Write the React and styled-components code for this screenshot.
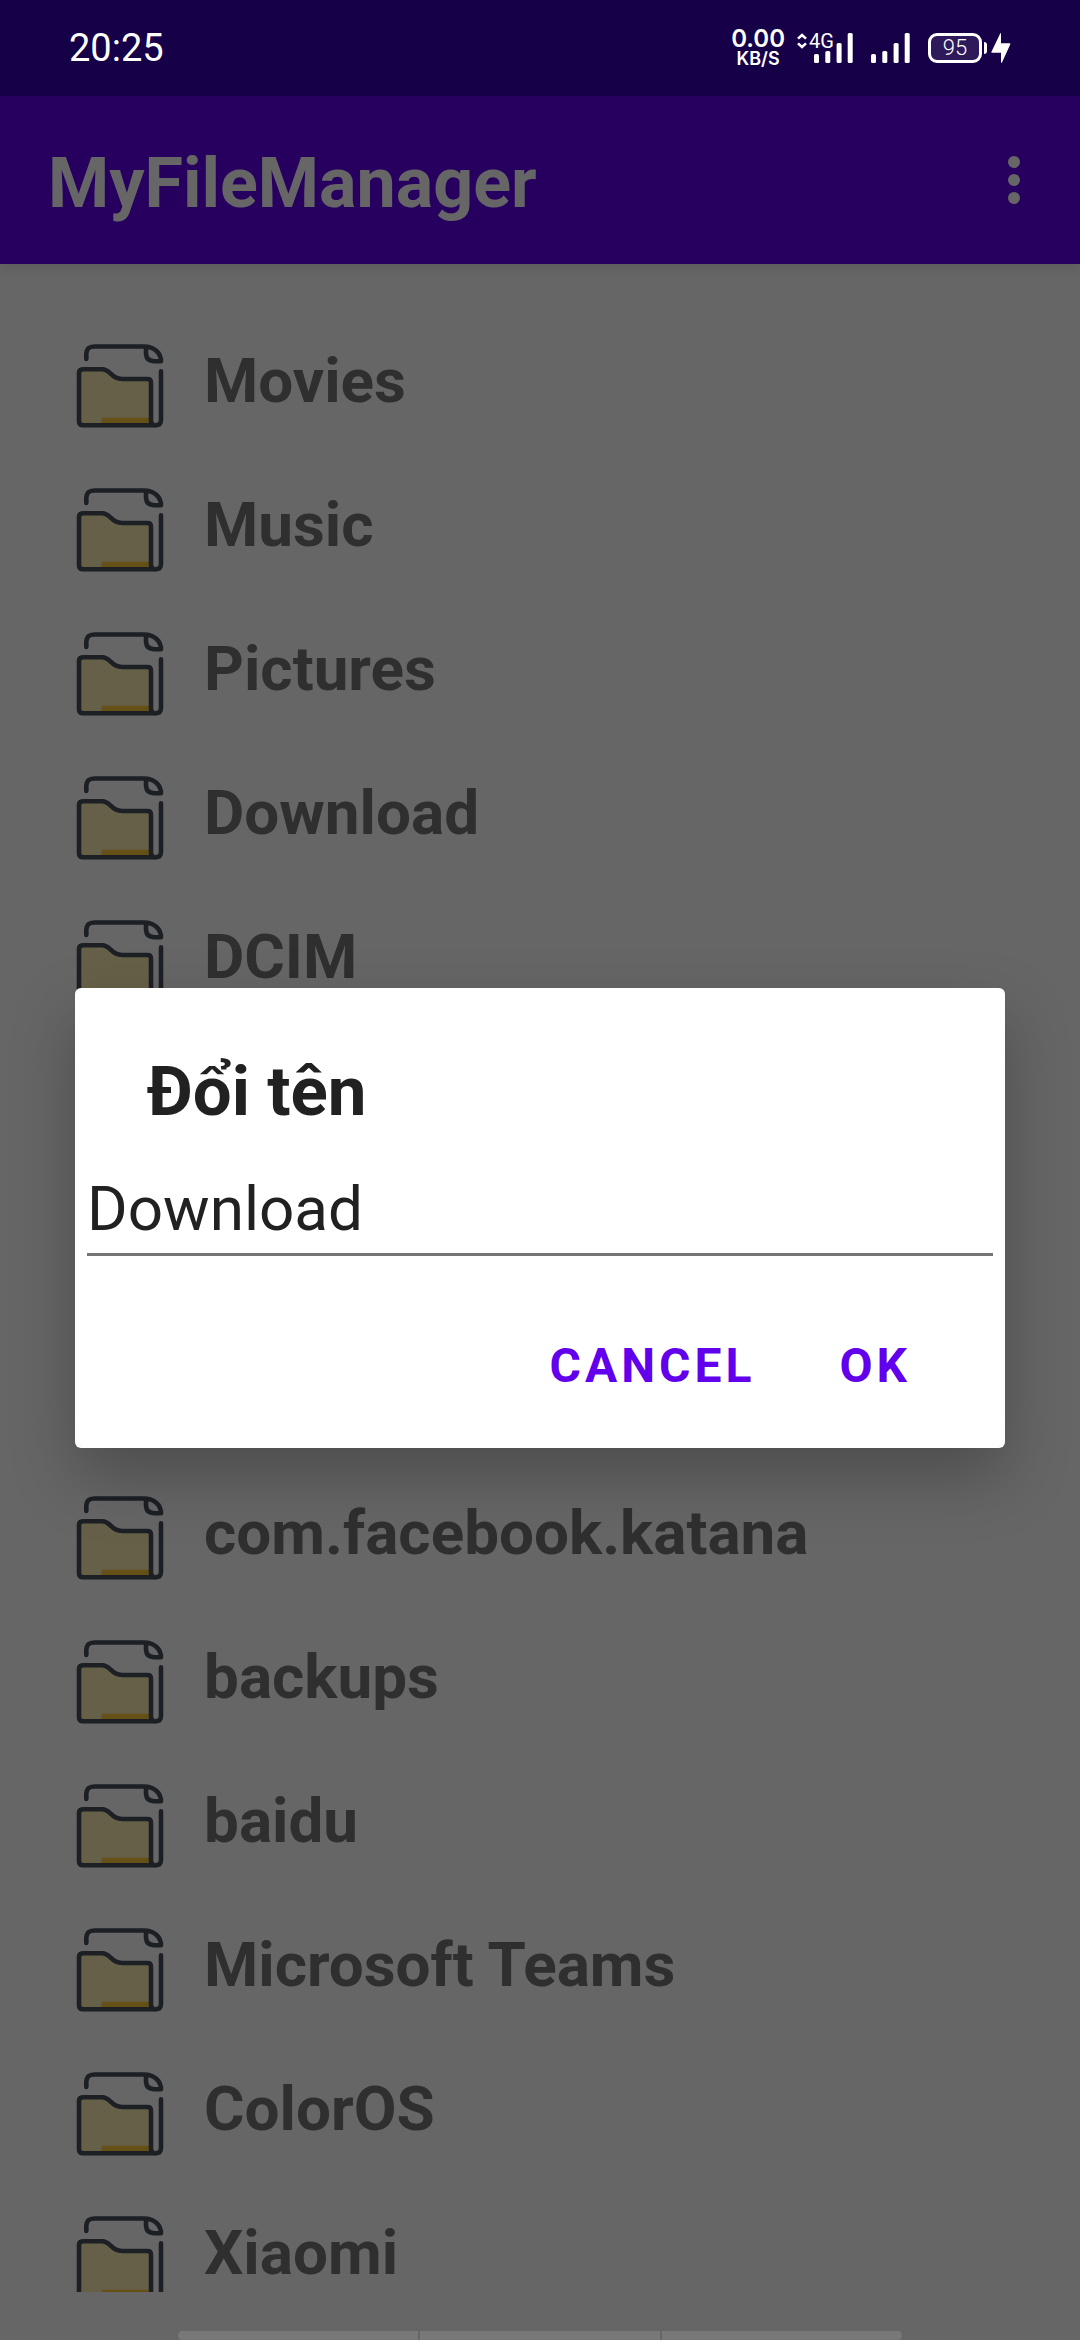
import React, { useState } from "react";
import styled, { createGlobalStyle } from "styled-components";

const GlobalStyle = createGlobalStyle`
  *, *::before, *::after { box-sizing: border-box; }
  body { margin: 0; background: #666666; font-family: Roboto, "Noto Sans", sans-serif; }
  h1, h2, ul { margin: 0; padding: 0; }
`;

const Screen = styled.div`
  position: relative;
  display: flex;
  flex-direction: column;
  height: 100vh;
  overflow: hidden;
  background: #ffffff;
`;

const StatusBar = styled.div`
  position: relative;
  z-index: 3;
  flex: none;
  display: flex;
  align-items: center;
  justify-content: space-between;
  height: 96px;
  padding: 0 69px;
  background: #160048;
  color: #ffffff;
`;

const Clock = styled.time`
  font-size: 38px;
  line-height: 44px;
`;

const StatusIcons = styled.div`
  display: flex;
  align-items: center;
  gap: 18px;
`;

const NetworkGroup = styled.div`
  display: flex;
  align-items: center;
  gap: 12px;
`;

const Speed = styled.div`
  display: flex;
  flex-direction: column;
  align-items: center;
  font-family: Inter, Roboto, sans-serif;
  font-weight: 600;
`;

const SpeedValue = styled.span`
  font-size: 24px;
  line-height: 22px;
`;

const SpeedUnit = styled.span`
  font-size: 18px;
  line-height: 18px;
`;

const MobileSignal = styled.div`
  position: relative;
  display: flex;
  justify-content: flex-end;
  width: 56px;
`;

const Generation = styled.span`
  position: absolute;
  top: 0;
  left: 0;
  display: flex;
  align-items: center;
  gap: 2px;
  font-size: 20px;
  line-height: 16px;
`;

const PowerGroup = styled.div`
  display: flex;
  align-items: center;
  gap: 4px;
`;

const Battery = styled.div`
  display: flex;
  align-items: center;
  gap: 2px;
`;

const BatteryBody = styled.div`
  display: flex;
  align-items: center;
  justify-content: center;
  width: 54px;
  height: 30px;
  border: 3px solid #ffffff;
  border-radius: 9px;
  background: #2e1a5a;
  font-size: 22px;
  font-weight: 300;
  line-height: 24px;
`;

const BatteryTip = styled.div`
  width: 3px;
  height: 12px;
  border-radius: 0 3px 3px 0;
  background: #ffffff;
`;

const AppBar = styled.header`
  position: relative;
  z-index: 1;
  flex: none;
  display: flex;
  align-items: center;
  justify-content: space-between;
  height: 168px;
  padding: 0 24px 0 48px;
  background: #6200ee;
  box-shadow: 0 4px 12px rgba(0, 0, 0, 0.1);
`;

const AppTitle = styled.h1`
  padding-top: 6px;
  color: #ffffff;
  font-size: 70px;
  line-height: 80px;
  font-weight: 700;
`;

const MenuButton = styled.button`
  display: flex;
  flex-direction: column;
  align-items: center;
  justify-content: center;
  gap: 6px;
  width: 84px;
  height: 96px;
  padding: 0;
  border: 0;
  background: transparent;
`;

const Dot = styled.span`
  width: 12px;
  height: 12px;
  border-radius: 50%;
  background: #ffffff;
`;

const FileList = styled.ul`
  flex: 1;
  min-height: 0;
  display: flex;
  flex-direction: column;
  gap: 60px;
  padding: 80px 76px 0;
  overflow: hidden;
  list-style: none;
`;

const FileRow = styled.li`
  flex: none;
  display: flex;
  align-items: flex-start;
  gap: 40px;
  height: 84px;
`;

const FileName = styled.span`
  color: #757575;
  font-size: 62px;
  line-height: 74px;
  font-weight: 700;
`;

const NavArea = styled.nav`
  position: relative;
  z-index: 3;
  flex: none;
  display: flex;
  align-items: flex-end;
  justify-content: center;
  gap: 2px;
  height: 48px;
`;

const NavSegment = styled.span`
  width: 22.2%;
  height: 9px;
  background: #787878;

  &:first-child { border-radius: 5px 0 0 5px; }
  &:last-child { border-radius: 0 5px 5px 0; }
`;

const Scrim = styled.div`
  position: absolute;
  inset: 96px 0 0;
  z-index: 2;
  display: flex;
  align-items: center;
  padding: 0 75px;
  background: rgba(0, 0, 0, 0.6);
`;

const Dialog = styled.form`
  flex: 1;
  display: flex;
  flex-direction: column;
  padding: 64px 12px 28px;
  border-radius: 6px;
  background: #ffffff;
  box-shadow: 0 28px 64px rgba(0, 0, 0, 0.25);
`;

const DialogTitle = styled.h2`
  padding: 0 60px;
  color: #212121;
  font-size: 69px;
  line-height: 80px;
  font-weight: 700;
`;

const NameInput = styled.input`
  width: 100%;
  height: 124px;
  padding: 40px 0 9px;
  border: 0;
  border-bottom: 3px solid #757575;
  border-radius: 0;
  outline: 0;
  background: transparent;
  color: #212121;
  font-family: inherit;
  font-size: 62px;
  line-height: 72px;
`;

const Actions = styled.div`
  display: flex;
  justify-content: flex-end;
  gap: 36px;
  padding: 56px 58px 0 0;
`;

const ActionButton = styled.button`
  height: 108px;
  padding: 0 24px;
  border: 0;
  background: transparent;
  color: #6200ee;
  font-family: inherit;
  font-size: 48px;
  line-height: 56px;
  font-weight: 700;
  letter-spacing: 4px;
  text-transform: uppercase;
`;

const SignalBars = () => (
  <svg width="39" height="30" viewBox="0 0 39 30" fill="#ffffff" aria-hidden="true">
    <rect x="0" y="21" width="5" height="9" rx="1.5" />
    <rect x="11.3" y="18" width="5" height="12" rx="1.5" />
    <rect x="22.6" y="10" width="5" height="20" rx="1.5" />
    <rect x="33.7" y="0" width="5" height="30" rx="1.5" />
  </svg>
);

const DataArrows = () => (
  <svg width="10" height="16" viewBox="0 0 10 16" fill="none" stroke="#ffffff" strokeWidth="2.6" aria-hidden="true">
    <path d="M1 5.6 L5 2 L9 5.6" />
    <path d="M1 10.4 L5 14 L9 10.4" />
  </svg>
);

const Bolt = () => (
  <svg width="20" height="30" viewBox="0 0 20 30" fill="#ffffff" aria-hidden="true">
    <path d="M9.2 0.5 Q10 -0.5 10 1 V10.3 H18.6 Q19.8 10.3 19.2 11.5 L11.2 29 Q10 31 10 28.8 V19.7 H1.2 Q0 19.7 0.6 18.5 Z" />
  </svg>
);

const FolderIcon = () => (
  <svg width="88" height="84" viewBox="0 0 88 84" fill="none" aria-hidden="true">
    <path
      d="M3 29.3 Q3 25.3 7 25.3 H26 C35 25.3 34.5 35 46 35 H71.5 Q75 35 75 38.5 V81.3 H7 Q3 81.3 3 77.3 Z"
      fill="#fff0b4"
    />
    <path d="M25.3 80 V76.5 Q25.3 73.8 28 73.8 H75 V80 Z" fill="#ffc83c" />
    <g stroke="#464e5a" strokeWidth="4.6" strokeLinecap="round" strokeLinejoin="round">
      <path d="M10.3 15 V10 Q10.3 2.5 18 2.5 H68 C78 2.5 85 9 85 17.2 H79 Q70 17.2 70 9 V2.8" />
      <path d="M3 29.3 Q3 25.3 7 25.3 H26 C35 25.3 34.5 35 46 35 H71.5 Q75 35 75 38.5 V77 Q75 81.3 79.5 81.3 H7 Q3 81.3 3 77.3 Z" />
      <path d="M85 27.2 V76 Q85 81.3 79.5 81.3" />
    </g>
  </svg>
);

const files = [
  "Movies",
  "Music",
  "Pictures",
  "Download",
  "DCIM",
  "",
  "",
  "",
  "com.facebook.katana",
  "backups",
  "baidu",
  "Microsoft Teams",
  "ColorOS",
  "Xiaomi",
];

export default function App() {
  const [name, setName] = useState("Download");

  return (
    <>
      <GlobalStyle />
      <Screen>
        <StatusBar>
          <Clock>20:25</Clock>
          <StatusIcons>
            <NetworkGroup>
              <Speed>
                <SpeedValue>0.00</SpeedValue>
                <SpeedUnit>KB/S</SpeedUnit>
              </Speed>
              <MobileSignal>
                <Generation>
                  <DataArrows />
                  4G
                </Generation>
                <SignalBars />
              </MobileSignal>
            </NetworkGroup>
            <SignalBars />
            <PowerGroup>
              <Battery>
                <BatteryBody>95</BatteryBody>
                <BatteryTip />
              </Battery>
              <Bolt />
            </PowerGroup>
          </StatusIcons>
        </StatusBar>

        <AppBar>
          <AppTitle>MyFileManager</AppTitle>
          <MenuButton type="button" aria-label="More options">
            <Dot />
            <Dot />
            <Dot />
          </MenuButton>
        </AppBar>

        <FileList>
          {files.map((file, index) => (
            <FileRow key={index}>
              <FolderIcon />
              <FileName>{file}</FileName>
            </FileRow>
          ))}
        </FileList>

        <NavArea>
          <NavSegment />
          <NavSegment />
          <NavSegment />
        </NavArea>

        <Scrim>
          <Dialog role="dialog" aria-labelledby="rename-title" onSubmit={(e) => e.preventDefault()}>
            <DialogTitle id="rename-title">Đổi tên</DialogTitle>
            <NameInput
              type="text"
              aria-labelledby="rename-title"
              value={name}
              onChange={(e) => setName(e.target.value)}
            />
            <Actions>
              <ActionButton type="button">Cancel</ActionButton>
              <ActionButton type="submit">OK</ActionButton>
            </Actions>
          </Dialog>
        </Scrim>
      </Screen>
    </>
  );
}
